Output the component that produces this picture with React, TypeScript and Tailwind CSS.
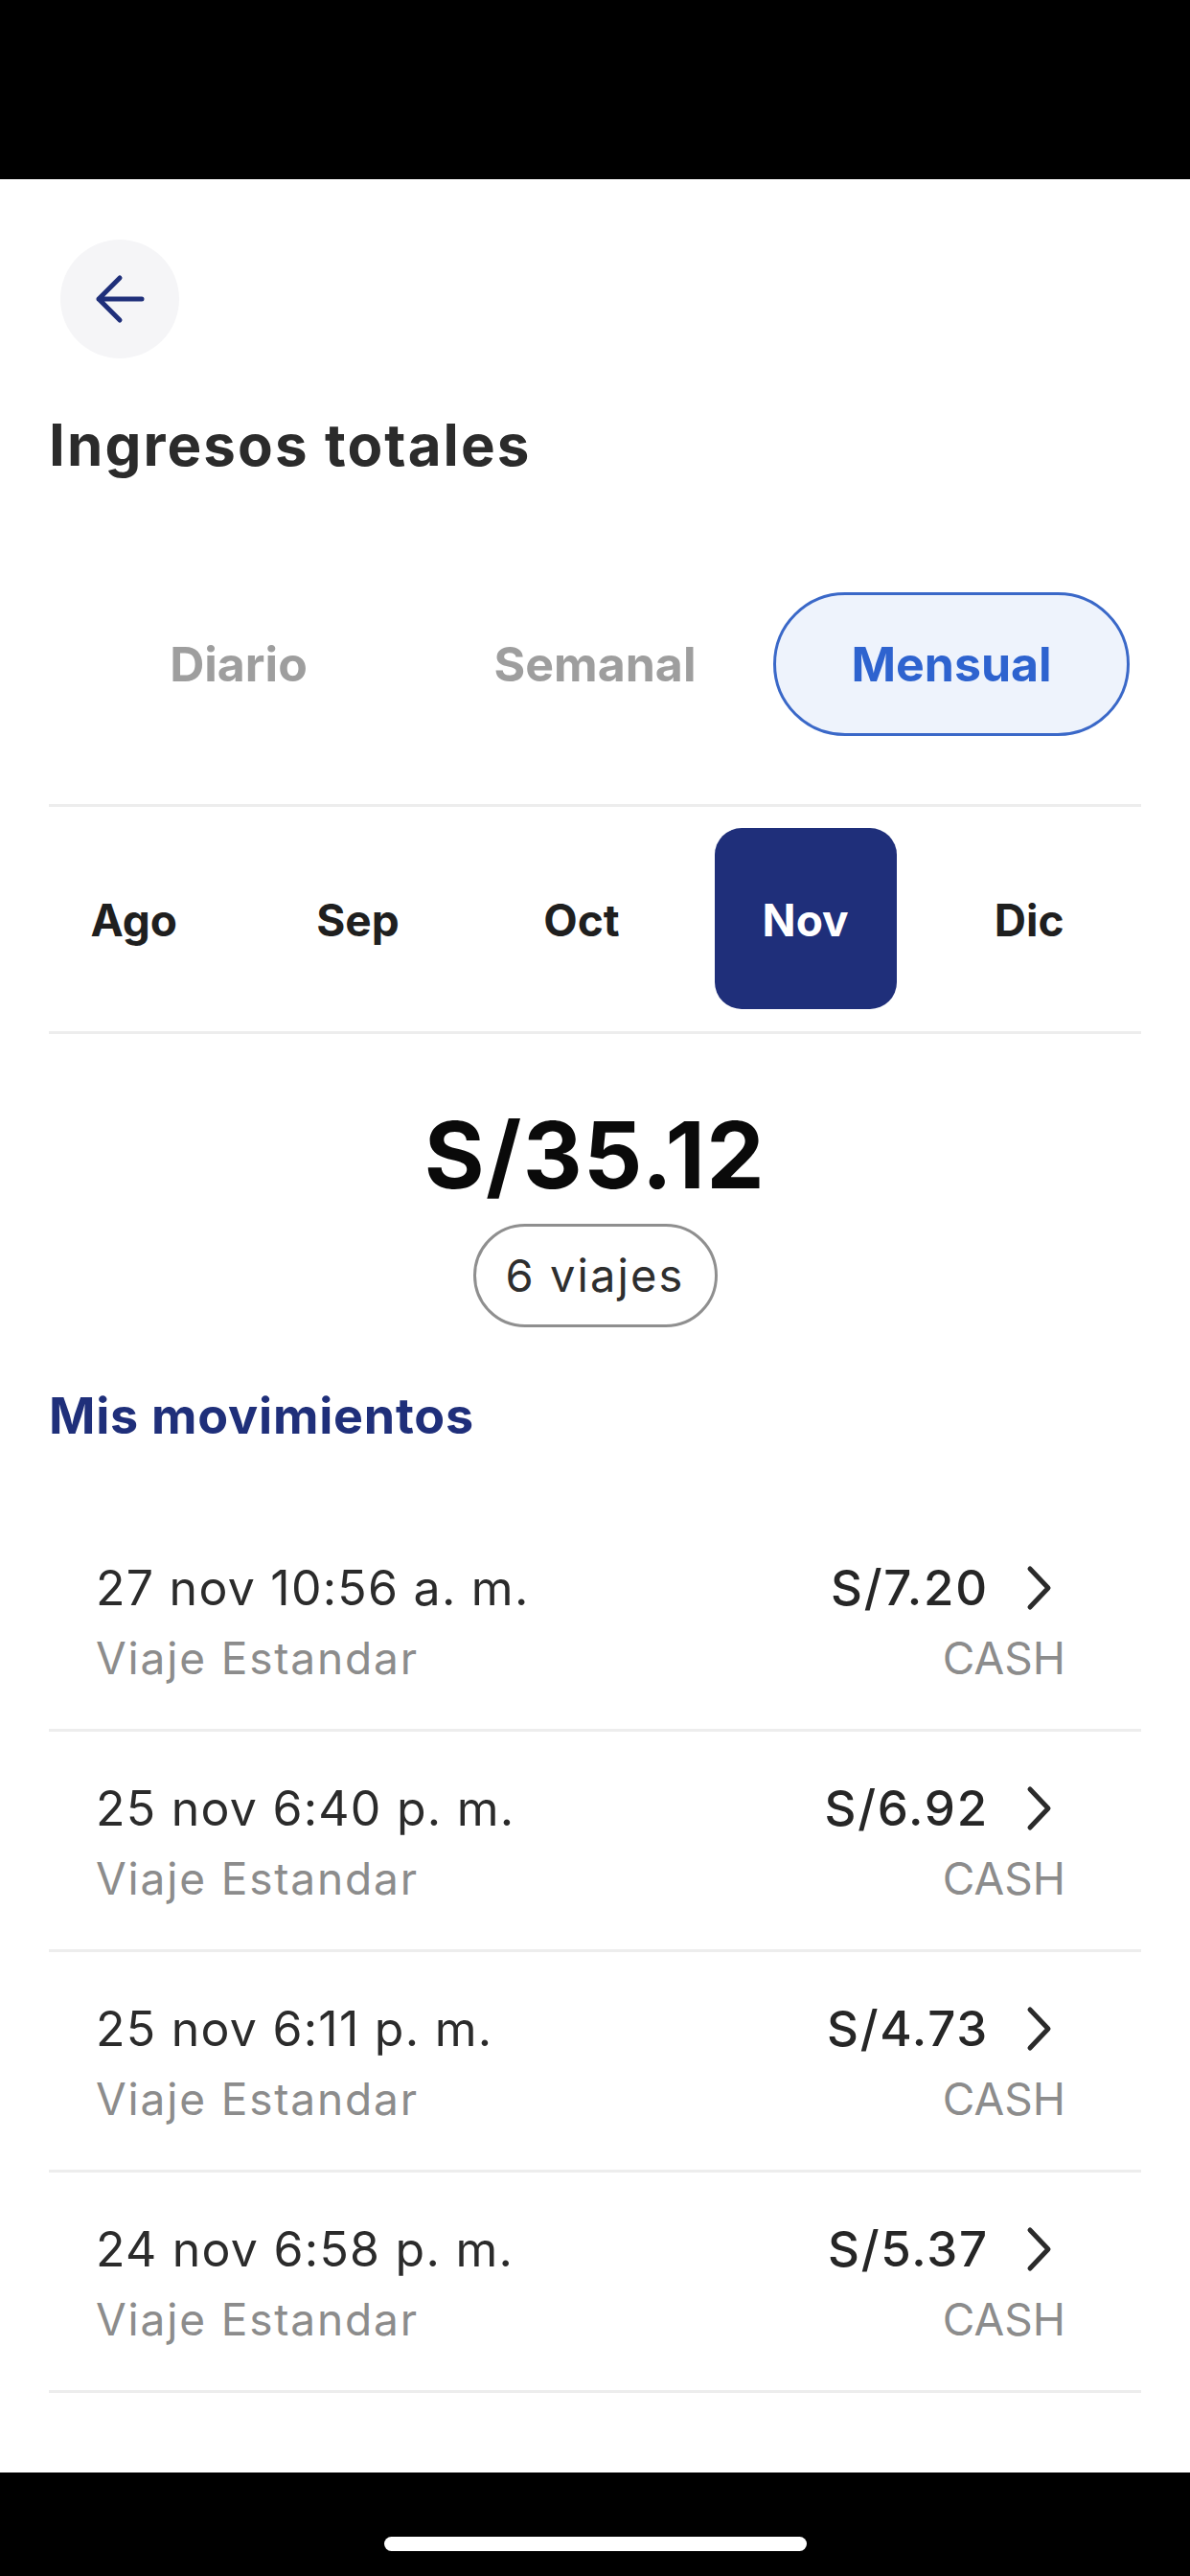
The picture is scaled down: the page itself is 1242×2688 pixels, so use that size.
import React from "react";

const movimientos = [
  { fecha: "27 nov 10:56 a. m.", monto: "S/7.20" },
  { fecha: "25 nov 6:40 p. m.", monto: "S/6.92" },
  { fecha: "25 nov 6:11 p. m.", monto: "S/4.73" },
  { fecha: "24 nov 6:58 p. m.", monto: "S/5.37" },
];

const periodos = ["Diario", "Semanal", "Mensual"];
const meses = ["Ago", "Sep", "Oct", "Nov", "Dic"];

function Chevron() {
  return (
    <svg width="28" height="48" viewBox="0 0 28 48" fill="none">
      <path d="M5 4L24 24L5 44" stroke="#2b2b2b" strokeWidth="5" strokeLinecap="round" strokeLinejoin="round" />
    </svg>
  );
}

function Fila({ fecha, monto }: { fecha: string; monto: string }) {
  return (
    <div className="flex justify-between border-b-[3px] border-[#ededed] pb-[46px] pl-[49px] pr-[79px] pt-[50px]">
      <div className="flex flex-col gap-[15px]">
        <span className="text-[50px] leading-[60px] tracking-[0.025em] text-[#2b2b2b]">{fecha}</span>
        <span className="text-[46px] leading-[56px] tracking-[0.04em] text-[#8c8c8c]">Viaje Estandar</span>
      </div>
      <div className="flex flex-col items-end gap-[15px]">
        <div className="flex h-[60px] items-center gap-[38px] pr-[14px]">
          <span className="text-[51px] font-medium leading-[60px] tracking-[0.035em] text-[#262626]">{monto}</span>
          <Chevron />
        </div>
        <span className="text-[46px] leading-[56px] text-[#8c8c8c]">CASH</span>
      </div>
    </div>
  );
}

export default function App() {
  return (
    <div className="flex h-[2688px] w-[1242px] flex-col bg-white font-['Inter',sans-serif]">
      <div className="h-[187px] bg-black" />

      <main className="flex-1">
        <div className="ml-[63px] mt-[63px] flex h-[124px] w-[124px] items-center justify-center rounded-full bg-[#f5f5f7]">
          <svg width="52" height="52" viewBox="0 0 52 52" fill="none">
            <path d="M49 26H4M26 4L4 26L26 48" stroke="#1f2f7a" strokeWidth="5" strokeLinecap="round" strokeLinejoin="round" />
          </svg>
        </div>

        <h1 className="mt-[54px] pl-[51px] text-[60px] font-bold leading-[72px] tracking-[0.035em] text-[#2b2b2b]">
          Ingresos totales
        </h1>

        <div className="mt-[118px] grid grid-cols-3 px-[63px]">
          {periodos.map((p) =>
            p === "Mensual" ? (
              <div
                key={p}
                className="flex h-[150px] items-center justify-center rounded-full border-[3px] border-[#3a68c8] bg-[#eef3fc] text-[50px] font-bold text-[#2e63cf]"
              >
                {p}
              </div>
            ) : (
              <div key={p} className="flex h-[150px] items-center justify-center text-[50px] font-bold text-[#9e9e9e]">
                {p}
              </div>
            )
          )}
        </div>

        <div className="mx-[51px] mt-[71px] h-[3px] bg-[#ededed]" />

        <div className="mt-[22px] grid grid-cols-5 pl-[23px] pr-[51px]">
          {meses.map((m) => (
            <div key={m} className="flex justify-center">
              {m === "Nov" ? (
                <div className="flex h-[189px] w-[190px] items-center justify-center rounded-[28px] bg-[#1f2f7a] pt-[3px] text-[46px] font-bold text-white">
                  {m}
                </div>
              ) : (
                <div className="flex h-[189px] w-[190px] items-center justify-center pt-[3px] text-[46px] font-bold text-[#1f1f1f]">
                  {m}
                </div>
              )}
            </div>
          ))}
        </div>

        <div className="mx-[51px] mt-[23px] h-[3px] bg-[#ededed]" />

        <div className="mt-[78px] text-center text-[96px] font-bold leading-[96px] tracking-[0.015em] text-[#0a0a0a]">
          S/35.12
        </div>

        <div className="mt-[24px] flex justify-center">
          <div className="flex h-[108px] w-[255px] items-center justify-center rounded-full border-[3px] border-[#8f8f8f] text-[47px] tracking-[0.045em] text-[#2e2e2e]">
            6 viajes
          </div>
        </div>

        <h2 className="mt-[62px] pl-[51px] text-[52px] font-bold leading-[62px] tracking-[0.015em] text-[#1f2f7a]">
          Mis movimientos
        </h2>

        <div className="mx-[51px] mt-[68px]">
          {movimientos.map((m) => (
            <Fila key={m.fecha} fecha={m.fecha} monto={m.monto} />
          ))}
        </div>
      </main>

      <div className="flex h-[108px] justify-center bg-black pt-[67px]">
        <div className="h-[15px] w-[441px] rounded-full bg-white" />
      </div>
    </div>
  );
}
